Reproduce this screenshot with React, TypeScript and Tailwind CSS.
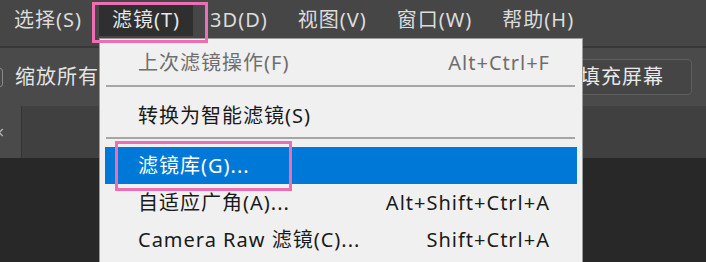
import React from "react";

const font = { fontFamily: '"Noto Sans", "Noto Sans CJK SC", sans-serif' };

const menus = [
  { label: "选择(S)" },
  { label: "滤镜(T)", active: true },
  { label: "3D(D)" },
  { label: "视图(V)" },
  { label: "窗口(W)" },
  { label: "帮助(H)" },
];

type Row =
  | { kind: "item"; label: string; shortcut?: string; disabled?: boolean; selected?: boolean }
  | { kind: "sep"; first?: boolean };

const rows: Row[] = [
  { kind: "item", label: "上次滤镜操作(F)", shortcut: "Alt+Ctrl+F", disabled: true },
  { kind: "sep", first: true },
  { kind: "item", label: "转换为智能滤镜(S)" },
  { kind: "sep" },
  { kind: "item", label: "滤镜库(G)...", selected: true },
  { kind: "item", label: "自适应广角(A)...", shortcut: "Alt+Shift+Ctrl+A" },
  { kind: "item", label: "Camera Raw 滤镜(C)...", shortcut: "Shift+Ctrl+A" },
];

export default function App() {
  return (
    <div className="relative h-[262px] w-[706px] overflow-hidden bg-[#282828] text-[20px] tracking-[1px]" style={font}>
      {/* menu bar */}
      <div className="flex h-[46px] items-start gap-[4px] bg-[#464646] pl-[1px] pt-[3px]">
        {menus.map((m) => (
          <div
            key={m.label}
            className={
              "flex h-[33px] items-center px-[13px] leading-none " +
              (m.active ? "bg-[#2f2f2f] text-[#e6e6e6]" : "text-[#dcdcdc]")
            }
          >
            {m.label}
          </div>
        ))}
      </div>
      <div className="h-[2px] bg-[#383838]" />

      {/* options bar */}
      <div className="flex h-[58px] items-center bg-[#4a4a4a]">
        <div className="-ml-[14px] h-[19px] w-[17px] rounded-[3px] border border-[#8a8a8a]" />
        <span className="ml-[12px] text-[#e4e4e4]">缩放所有窗口</span>
        <div className="ml-auto mr-[14px] flex h-[36px] items-center rounded-[4px] border border-[#5e5e5e] bg-[#454545] px-[27px] text-[#e8e8e8]">
          填充屏幕
        </div>
      </div>

      {/* document tabs */}
      <div className="flex h-[52px] bg-[#404040]">
        <div className="flex w-[22px] items-center overflow-hidden border-r border-[#333333] bg-[#4a4a4a]">
          <span className="-ml-[6px] text-[18px] text-[#b5b5b5]">×</span>
        </div>
      </div>

      {/* dropdown */}
      <div className="absolute left-[99px] top-[38px] h-[240px] w-[484px] border border-[#9a9a9a] bg-[#f0f0f0] px-[5px] pt-[5px]">
        {rows.map((r, i) =>
          r.kind === "sep" ? (
            <div key={i} className={r.first ? "pb-[10px] pt-[4px]" : "pb-[8px] pt-[3px]"}>
              <div className="ml-[1px] mr-[2px] h-[2px] bg-[#a6a6a6]" />
            </div>
          ) : (
            <div
              key={i}
              className={
                "flex h-[37px] items-center justify-between pl-[33px] pr-[27px] " +
                (r.selected ? "bg-[#0078d7] text-white" : r.disabled ? "text-[#6e6e6e]" : "text-[#1a1a1a]")
              }
            >
              <span>{r.label}</span>
              {r.shortcut && <span>{r.shortcut}</span>}
            </div>
          )
        )}
      </div>

      {/* annotation boxes */}
      <div className="absolute left-[92px] top-[2px] h-[41px] w-[116px] border-[3px] border-[#ec6fb3]" />
      <div className="absolute left-[115px] top-[141px] h-[50px] w-[177px] border-[3px] border-[#ec6fb3]" />
    </div>
  );
}
